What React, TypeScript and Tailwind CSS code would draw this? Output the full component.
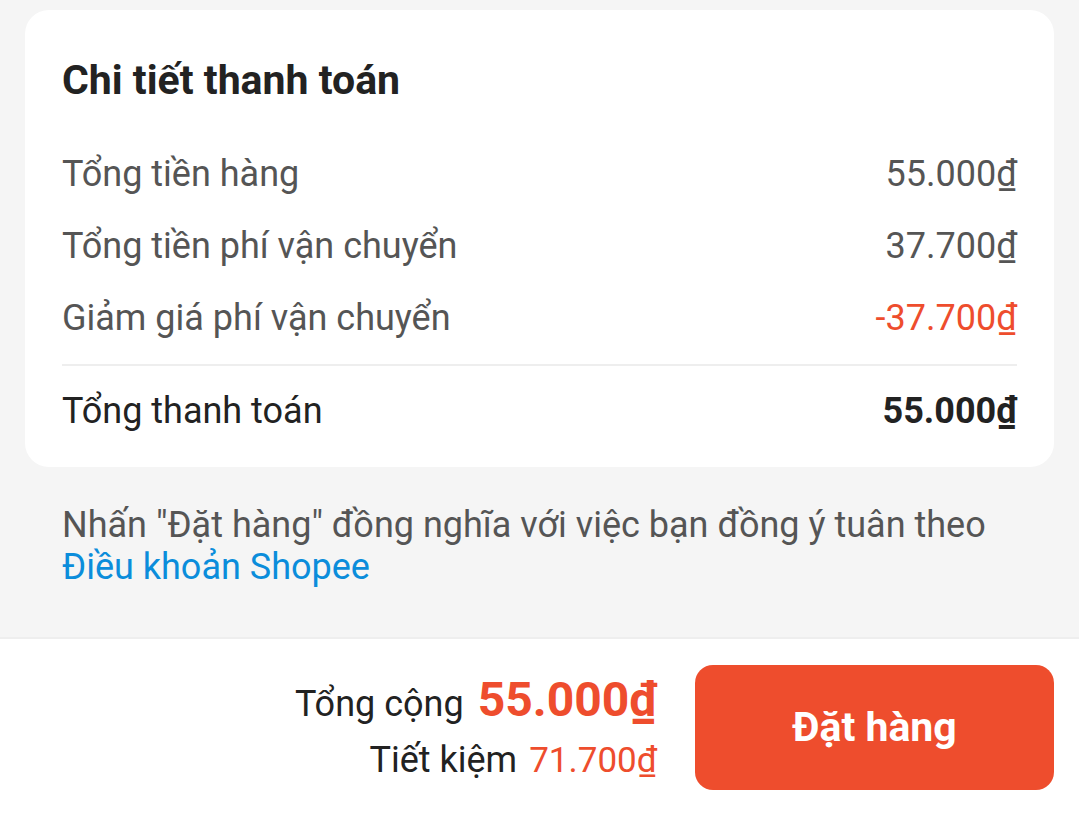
import React from "react";

const Row = ({ label, value, red = false }: { label: string; value: string; red?: boolean }) => (
  <div className="flex items-center justify-between h-[72px]">
    <span className="text-[#555555]">{label}</span>
    <span className={red ? "text-[#ee4d2d]" : "text-[#555555]"}>{value}</span>
  </div>
);

export default function App() {
  return (
    <div
      className="w-[1079px] h-[815px] bg-[#f5f5f5] flex flex-col overflow-hidden"
      style={{ fontFamily: "Roboto, 'Noto Sans', sans-serif" }}
    >
      <div className="px-[25px] pt-[10px]">
        <div className="bg-white rounded-[24px] px-[37px] pt-[50px] pb-[11px]">
          <h2 className="text-[41px] font-bold text-[#222222] leading-none mb-[37px]">Chi tiết thanh toán</h2>
          <div className="text-[36px]">
            <Row label="Tổng tiền hàng" value="55.000₫" />
            <Row label="Tổng tiền phí vận chuyển" value="37.700₫" />
            <Row label="Giảm giá phí vận chuyển" value="-37.700₫" red />
            <div className="border-t-2 border-[#eeeeee] mt-[10px]" />
            <div className="flex items-center justify-between h-[90px]">
              <span className="text-[#222222]">Tổng thanh toán</span>
              <span className="text-[#222222] font-bold">55.000₫</span>
            </div>
          </div>
        </div>
      </div>

      <div className="px-[62px] pt-[37px] text-[36px] leading-[42px] h-[170px]">
        <p className="text-[#555555]">Nhấn "Đặt hàng" đồng nghĩa với việc bạn đồng ý tuân theo</p>
        <p className="text-[#0b8ddb]">Điều khoản Shopee</p>
      </div>

      <div className="flex-1 bg-white border-t-2 border-[#eeeeee] flex items-start justify-end pr-[25px] pt-[26px]">
        <div className="flex flex-col items-end mr-[38px] pt-[11px]">
          <div className="flex items-baseline gap-[14px] h-[50px]">
            <span className="text-[36px] text-[#222222]">Tổng cộng</span>
            <span className="text-[48px] font-bold text-[#ee4d2d] leading-none">55.000₫</span>
          </div>
          <div className="flex items-baseline gap-[12px] mt-[7px]">
            <span className="text-[36px] text-[#222222]">Tiết kiệm</span>
            <span className="text-[35px] text-[#ee4d2d]">71.700₫</span>
          </div>
        </div>
        <button className="w-[359px] h-[125px] rounded-[18px] bg-[#ee4d2d] text-white text-[41px] font-bold">
          Đặt hàng
        </button>
      </div>
    </div>
  );
}
